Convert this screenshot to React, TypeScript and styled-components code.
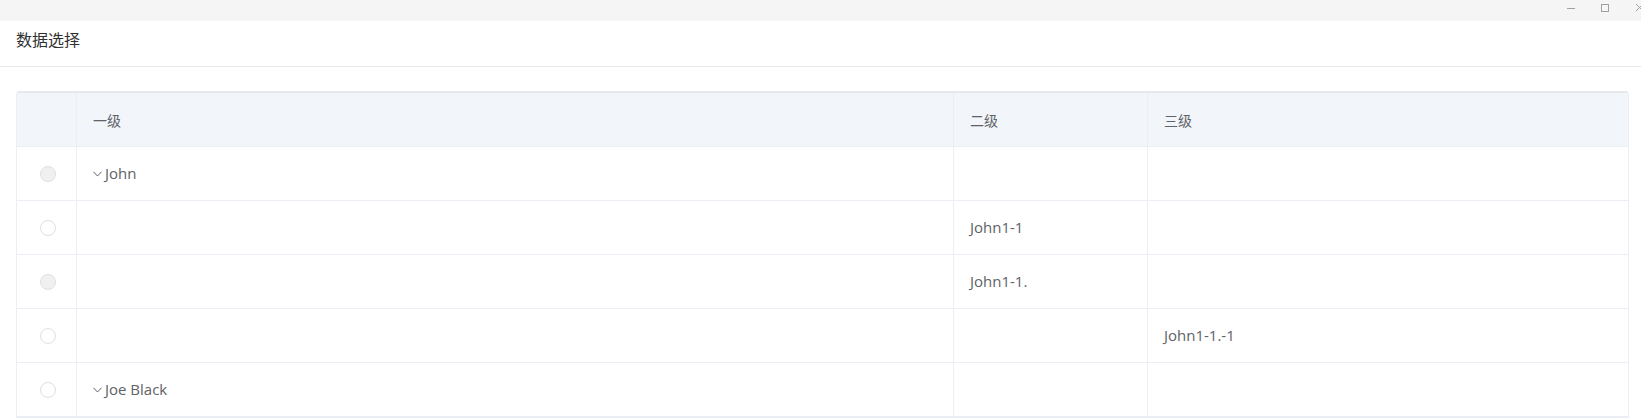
import React from "react";
import styled, { createGlobalStyle } from "styled-components";

const Global = createGlobalStyle`
  html, body { margin: 0; padding: 0; background: #fff; }
  body { font-family: "Open Sans", "Noto Sans CJK SC", sans-serif; }
  * { box-sizing: border-box; }
`;

const Page = styled.div`
  width: 1641px;
  height: 420px;
  overflow: hidden;
  background: #fff;
`;

const TitleBar = styled.div`
  height: 21px;
  background: #f5f5f5;
  display: flex;
  justify-content: flex-end;
  align-items: flex-start;
  overflow: hidden;
`;

const WinButton = styled.div<{ $w?: number }>`
  width: ${(p) => p.$w ?? 34}px;
  height: 21px;
  padding-top: 3px;
  display: flex;
  justify-content: center;
  flex-shrink: 0;
`;

const Header = styled.div`
  height: 46px;
  border-bottom: 1px solid #e8e8e8;
  display: flex;
  align-items: center;
  padding: 0 0 9px 16px;
  font-family: "Noto Sans CJK SC", sans-serif;
  font-size: 16px;
  color: #303133;
`;

const Content = styled.div`
  padding: 24px 12px 0 16px;
`;

const Table = styled.div`
  border: 1px solid #ebeef5;
  border-top: 2px solid #e6e8ec;
  border-radius: 4px 4px 0 0;
  display: grid;
  grid-template-columns: 60px 877px 194px 1fr;
  color: #606266;
`;

const Cell = styled.div<{ $head?: boolean; $last?: boolean; $center?: boolean }>`
  height: 54px;
  border-bottom: 1px solid #ebeef5;
  border-right: ${(p) => (p.$last ? "none" : "1px solid #ebeef5")};
  background: ${(p) => (p.$head ? "#f2f5fa" : "#fff")};
  display: flex;
  align-items: center;
  justify-content: ${(p) => (p.$center ? "center" : "flex-start")};
  padding: ${(p) => (p.$center ? "0 0 0 2px" : p.$head ? "0 16px" : "0 16px 2px 16px")};
  font-family: ${(p) => (p.$head ? `"Noto Sans CJK SC", sans-serif` : `"Open Sans", "Noto Sans CJK SC", sans-serif`)};
  font-size: ${(p) => (p.$head ? "14px" : "15px")};
  white-space: nowrap;
`;

const Radio = styled.span<{ $disabled?: boolean }>`
  width: 16px;
  height: 16px;
  border-radius: 50%;
  border: 1px solid #dcdfe6;
  background: ${(p) => (p.$disabled ? "#f0f0f0" : "#fff")};
  display: inline-block;
`;

const Expander = styled.span`
  display: inline-flex;
  align-items: center;
  margin-right: 3px;
  margin-top: 3px;
`;

const Chevron = () => (
  <Expander>
    <svg width="9" height="6" viewBox="0 0 9 6">
      <path d="M0.5 0.8 L4.5 5 L8.5 0.8" fill="none" stroke="#606266" strokeWidth="1" />
    </svg>
  </Expander>
);

type Row = { disabled: boolean; l1?: string; l2?: string; l3?: string; expand?: boolean };

const rows: Row[] = [
  { disabled: true, l1: "John", expand: true },
  { disabled: false, l2: "John1-1" },
  { disabled: true, l2: "John1-1." },
  { disabled: false, l3: "John1-1.-1" },
  { disabled: false, l1: "Joe Black", expand: true },
];

export default function App() {
  return (
    <Page>
      <Global />
      <TitleBar>
        <WinButton>
          <svg width="10" height="10" viewBox="0 0 10 10">
            <path d="M1 5.5 H9" stroke="#a0a0a0" strokeWidth="1" />
          </svg>
        </WinButton>
        <WinButton>
          <svg width="10" height="10" viewBox="0 0 10 10">
            <rect x="1.5" y="1.5" width="7" height="7" fill="none" stroke="#a0a0a0" strokeWidth="1" />
          </svg>
        </WinButton>
        <WinButton $w={19}>
          <svg width="19" height="10" viewBox="0 0 19 10">
            <path d="M14 1 L21 8 M21 1 L14 8" stroke="#a0a0a0" strokeWidth="1" />
          </svg>
        </WinButton>
      </TitleBar>
      <Header>数据选择</Header>
      <Content>
        <Table>
          <Cell $head $center />
          <Cell $head>一级</Cell>
          <Cell $head>二级</Cell>
          <Cell $head $last>三级</Cell>
          {rows.map((r, i) => (
            <React.Fragment key={i}>
              <Cell $center>
                <Radio $disabled={r.disabled} />
              </Cell>
              <Cell>
                {r.expand && <Chevron />}
                {r.l1}
              </Cell>
              <Cell>{r.l2}</Cell>
              <Cell $last>{r.l3}</Cell>
            </React.Fragment>
          ))}
        </Table>
      </Content>
    </Page>
  );
}
